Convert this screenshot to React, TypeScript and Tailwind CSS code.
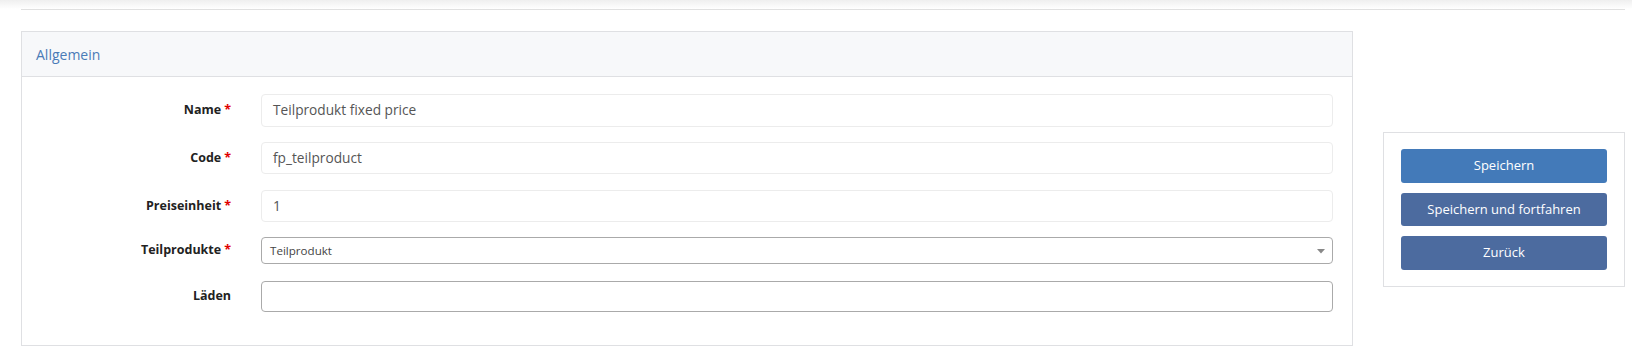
import { ReactNode } from "react";

const font = { fontFamily: '"Open Sans", "Liberation Sans", sans-serif' };

function Label({ children, required }: { children: ReactNode; required?: boolean }) {
  return (
    <div className="w-[209px] shrink-0 text-right text-[12.5px] font-bold text-[#222]">
      {children}
      {required && <span className="ml-[3px] text-[#e00000]">*</span>}
    </div>
  );
}

function TextField({ value, h }: { value: string; h: string }) {
  return (
    <div
      className={`flex flex-1 items-center rounded-[4px] border border-[#ececec] bg-white px-[11px] text-[13.7px] text-[#555] ${h}`}
    >
      {value}
    </div>
  );
}

export default function App() {
  return (
    <div className="min-h-[358px] w-[1632px] bg-white" style={font}>
      {/* top shade + divider */}
      <div className="h-[9px] bg-gradient-to-b from-[#efefef] to-white" />
      <div className="ml-[21px] mr-[7px] h-px bg-[#e0e0e0]" />

      <div className="flex items-start pl-[21px] pt-[21px]">
        {/* Allgemein panel */}
        <div className="w-[1332px] border border-[#dfe0e3]">
          <div className="flex h-[45px] items-center border-b border-[#dfe0e3] bg-[#f7f8fa] pl-[14px] text-[14px] text-[#4a7bb7]">
            Allgemein
          </div>
          <div className="pb-[33px] pr-[19px] pt-[17px]">
            <div className="flex items-center gap-[30px]">
              <Label required>Name</Label>
              <TextField value="Teilprodukt fixed price" h="h-[33px]" />
            </div>
            <div className="mt-[15px] flex items-center gap-[30px]">
              <Label required>Code</Label>
              <TextField value="fp_teilproduct" h="h-[32px]" />
            </div>
            <div className="mt-[16px] flex items-center gap-[30px]">
              <Label required>Preiseinheit</Label>
              <TextField value="1" h="h-[32px]" />
            </div>
            <div className="mt-[15px] flex items-center gap-[30px]">
              <Label required>Teilprodukte</Label>
              <div className="flex h-[27px] flex-1 items-center justify-between rounded-[4px] border border-[#aaaaaa] bg-white pl-[8px] pr-[6px] text-[11.6px] text-[#444]">
                <span>Teilprodukt</span>
                <svg width="10" height="6" viewBox="0 0 10 6">
                  <path d="M1 1h8L5 5.5z" fill="#888" />
                </svg>
              </div>
            </div>
            <div className="mt-[17px] flex items-center gap-[30px]">
              <Label>Läden</Label>
              <div className="h-[31px] flex-1 rounded-[4px] border border-[#aaaaaa] bg-white" />
            </div>
          </div>
        </div>

        {/* action box */}
        <div className="ml-[30px] mt-[101px] flex w-[242px] flex-col gap-[10px] border border-[#dfe0e3] px-[17px] pb-[16px] pt-[16px]">
          <button className="h-[34px] w-full rounded-[3px] bg-[#437ab9] text-[13px] text-white">
            Speichern
          </button>
          <button className="h-[33px] w-full rounded-[3px] bg-[#4c6b9f] text-[13px] text-white">
            Speichern und fortfahren
          </button>
          <button className="h-[34px] w-full rounded-[3px] bg-[#4c6b9f] text-[13px] text-white">
            Zurück
          </button>
        </div>
      </div>
    </div>
  );
}
